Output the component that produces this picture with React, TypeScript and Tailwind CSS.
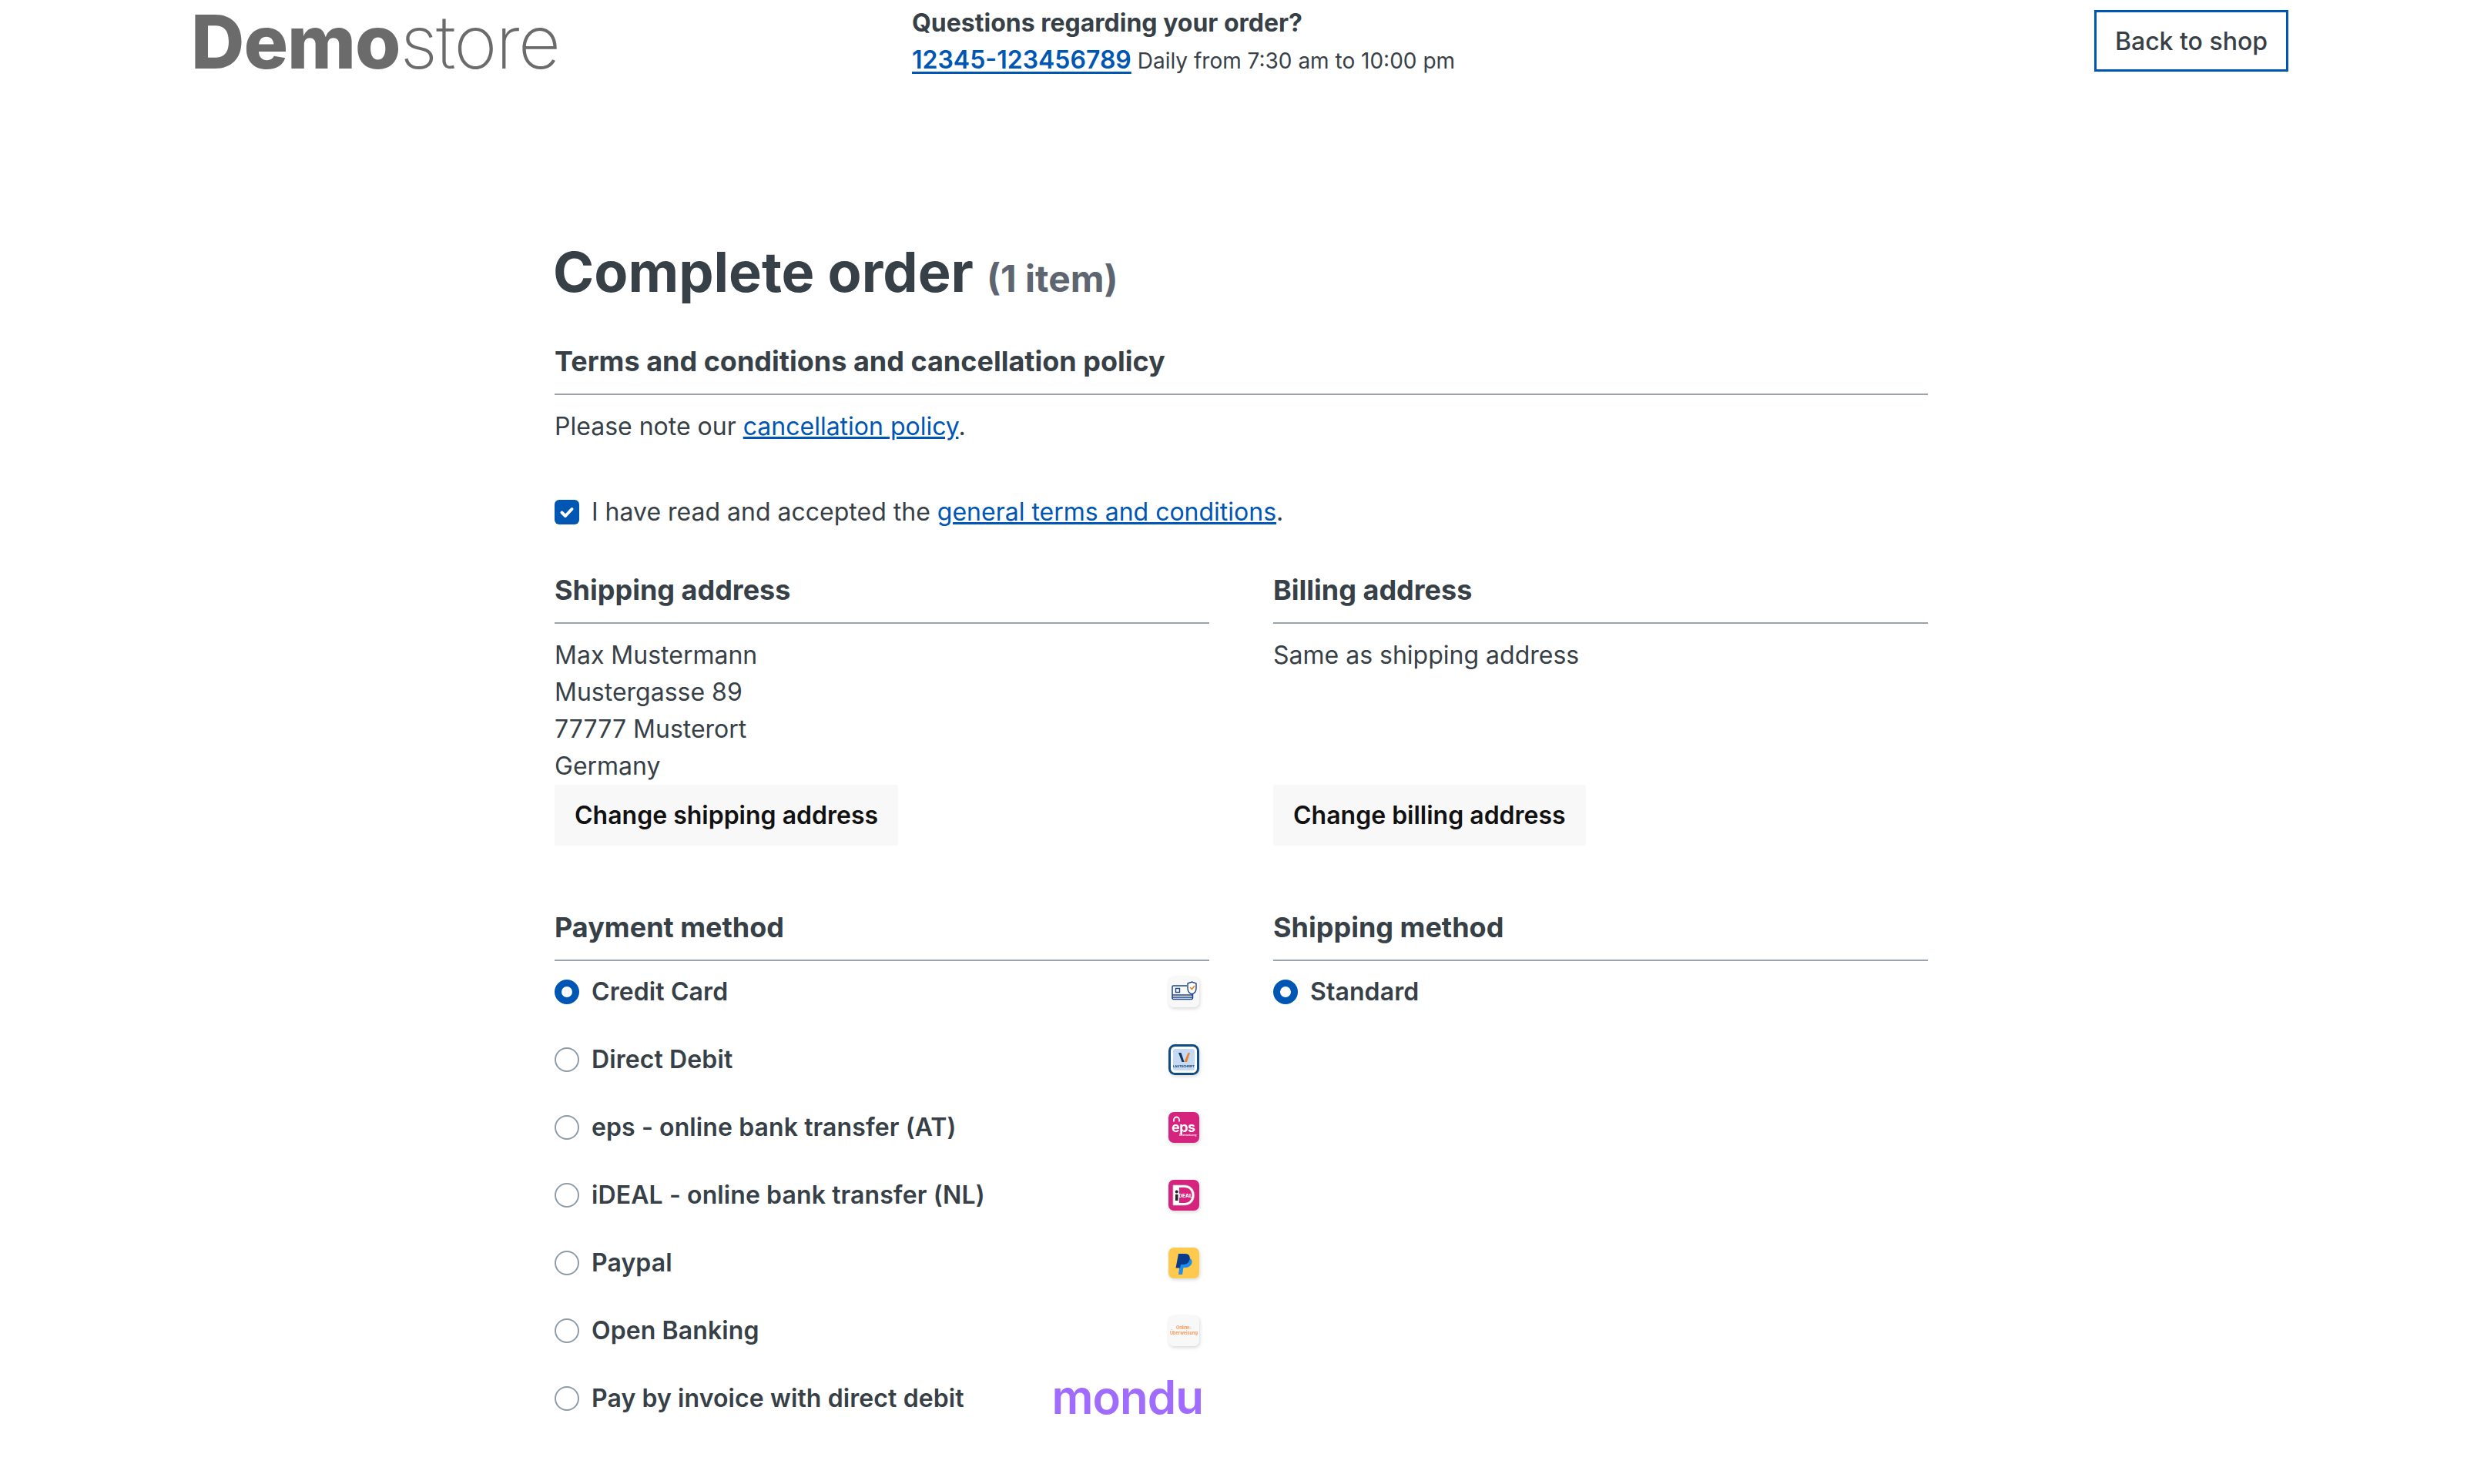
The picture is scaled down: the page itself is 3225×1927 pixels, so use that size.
const PAYMENTS = [
  { label: "Credit Card", icon: "card" },
  { label: "Direct Debit", icon: "debit" },
  { label: "eps - online bank transfer (AT)", icon: "eps" },
  { label: "iDEAL - online bank transfer (NL)", icon: "ideal" },
  { label: "Paypal", icon: "paypal" },
  { label: "Open Banking", icon: "open" },
] as const;

type IconName = (typeof PAYMENTS)[number]["icon"];

function PaymentIcon({ name }: { name: IconName }) {
  if (name === "card") {
    return (
      <svg viewBox="0 0 40 40" className="h-10 w-10 drop-shadow-[1px_2px_2px_rgba(0,0,0,0.15)]">
        <rect width="40" height="40" rx="7" fill="#f8f8f8" />
        <path d="M24 12H6.500a1.500 1.500 0 0 0-1.500 1.500V28a1.500 1.500 0 0 0 1.500 1.500H30a1.500 1.500 0 0 0 1.500-1.500V21" fill="none" stroke="#1c4587" strokeWidth="1.500" />
        <path d="M5 24h26.500M5 27h26.500" stroke="#1c4587" strokeWidth="1.400" />
        <rect x="9.500" y="15.500" width="5" height="5" fill="none" stroke="#1c4587" strokeWidth="1.400" />
        <path d="M25 9l5.500-2 5.500 2v6c0 4-2.500 7-5.500 8-3-1-5.500-4-5.500-8z" fill="#fff" stroke="#1c4587" strokeWidth="1.400" />
        <path d="M28 14l2.500 2.500 3.500-4.500" fill="none" stroke="#f07f2e" strokeWidth="1.600" />
      </svg>
    );
  }
  if (name === "debit") {
    return (
      <svg viewBox="0 0 40 40" className="h-10 w-10 drop-shadow-[1px_2px_2px_rgba(0,0,0,0.15)]">
        <rect x="1.500" y="1.500" width="37" height="37" rx="7" fill="#fff" stroke="#0f4c81" strokeWidth="3" />
        <rect x="6" y="6" width="28" height="28" rx="3" fill="#c5dbf3" />
        <path d="M13 11l4.500 12h3L16.500 11z" fill="#14345f" />
        <path d="M20.500 23l5-12h2.500L24 23z" fill="#f07f2e" />
        <text x="20" y="29.500" textAnchor="middle" fontSize="4" fontWeight="700" fill="#14345f" fontFamily="Inter, sans-serif">LASTSCHRIFT</text>
      </svg>
    );
  }
  if (name === "eps") {
    return (
      <svg viewBox="0 0 40 40" className="h-10 w-10 drop-shadow-[1px_2px_2px_rgba(0,0,0,0.15)]">
        <rect width="40" height="40" rx="7" fill="#d6247e" />
        <text x="4" y="26" fontSize="18" fontWeight="700" fill="#fff" fontFamily="Inter, sans-serif" letterSpacing="-0.500">eps</text>
        <path d="M7 12.500v-2.500a3.500 3.500 0 0 1 7 0v2.500" fill="none" stroke="#fff" strokeWidth="1.800" />
        <text x="14" y="31" fontSize="3.500" fill="#fff" fontFamily="Inter, sans-serif">Überweisung</text>
      </svg>
    );
  }
  if (name === "ideal") {
    return (
      <svg viewBox="0 0 40 40" className="h-10 w-10 drop-shadow-[1px_2px_2px_rgba(0,0,0,0.15)]">
        <rect width="40" height="40" rx="7" fill="#d6247e" />
        <path d="M6 7h15c7 0 12.500 5 12.500 13s-5.500 13-12.500 13H6z" fill="#fff" stroke="#bbb" strokeWidth="0.800" />
        <path d="M14 10h7c5.500 0 9.500 4 9.500 10s-4 10-9.500 10h-7z" fill="#d6247e" />
        <rect x="9" y="19" width="3.500" height="8" fill="#222" />
        <circle cx="10.700" cy="15.500" r="2" fill="#222" />
        <text x="22" y="22.500" textAnchor="middle" fontSize="6.500" fontWeight="800" fill="#fff" fontFamily="Inter, sans-serif">DEAL</text>
      </svg>
    );
  }
  if (name === "paypal") {
    return (
      <svg viewBox="0 0 40 40" className="h-10 w-10 drop-shadow-[1px_2px_2px_rgba(0,0,0,0.15)]">
        <rect width="40" height="40" rx="7" fill="#ffc94d" />
        <path d="M16 13h8c5 0 7 3 6.500 6.500S26.500 26 22.500 26h-3l-1.500 9h-5z" fill="#1f8ee8" />
        <path d="M13 8h8.500c5 0 7 3 6 7.500S23 22 19 22h-3l-1 4.500H9.500z" fill="#0a3a8c" />
      </svg>
    );
  }
  return (
    <svg viewBox="0 0 40 40" className="h-10 w-10 drop-shadow-[1px_2px_2px_rgba(0,0,0,0.15)]">
      <rect width="40" height="40" rx="7" fill="#f8f8f8" />
      <text x="20" y="18" textAnchor="middle" fontSize="5.500" fontWeight="700" fill="#f79a5a" fontFamily="Inter, sans-serif">Online-</text>
      <text x="20" y="25" textAnchor="middle" fontSize="5.500" fontWeight="700" fill="#f79a5a" fontFamily="Inter, sans-serif">Überweisung</text>
    </svg>
  );
}

function SectionTitle({ children }: { children: React.ReactNode }) {
  return (
    <h2 className="border-b-2 border-[#9aa3ad] pb-[18px] text-[36px] leading-[48px] font-bold text-[#373f47]">
      {children}
    </h2>
  );
}

function Radio({ checked }: { checked?: boolean }) {
  return checked ? (
    <span className="h-8 w-8 shrink-0 rounded-full border-[9px] border-[#0056b3] bg-white" />
  ) : (
    <span className="h-8 w-8 shrink-0 rounded-full border-2 border-[#8f9bab] bg-white" />
  );
}

function GrayButton({ children }: { children: React.ReactNode }) {
  return (
    <button className="h-[79px] rounded-[2px] bg-[#f8f8f8] px-[26px] text-[32px] font-semibold text-[#111]">
      {children}
    </button>
  );
}

export default function App() {
  return (
    <div className="min-h-[1927px] bg-white text-[32px] leading-[48px] text-[#373f47] [font-family:Inter,sans-serif]">
      {/* Header */}
      <header className="flex h-[93px] items-start pr-[254px] pl-[248px]">
        <div className="mt-[6px] w-[936px] text-[96px] leading-[96px] text-[#6b6b6b]">
          <span className="font-extrabold tracking-[-1px]">Demo</span>
          <span className="font-extralight tracking-[-2px]">store</span>
        </div>
        <div className="mt-[6px] flex-1">
          <div className="font-bold">Questions regarding your order?</div>
          <div className="text-[28px]">
            <a className="text-[32px] font-semibold text-[#0056b3] underline underline-offset-4">12345-123456789</a> Daily from 7:30 am to 10:00 pm
          </div>
        </div>
        <a className="mt-[13px] flex h-[80px] w-[252px] items-center justify-center border-[3px] border-[#0056b3] pt-[2px] font-medium">
          Back to shop
        </a>
      </header>

      <main className="ml-[720px] w-[1783px] pt-[212px]">
        <h1 className="-ml-[2px] text-[72px] leading-[96px] font-bold">
          Complete order <span className="text-[48px] text-[#5d6670]">(1 item)</span>
        </h1>

        <section className="mt-[35px]">
          <SectionTitle>Terms and conditions and cancellation policy</SectionTitle>
          <p className="mt-[17px]">
            Please note our <a className="text-[#0056b3] underline">cancellation policy</a>.
          </p>
          <label className="mt-[63px] flex items-center gap-4">
            <span className="flex h-8 w-8 items-center justify-center rounded-[6px] bg-[#0056b3]">
              <svg viewBox="0 0 24 24" className="h-6 w-6" fill="none" stroke="#fff" strokeWidth="4" strokeLinecap="round" strokeLinejoin="round">
                <path d="M5.500 12.500l4.500 4.500 8.500-9" />
              </svg>
            </span>
            <span>
              I have read and accepted the <a className="text-[#0056b3] underline">general terms and conditions</a>.
            </span>
          </label>
        </section>

        <div className="mt-[53px] grid grid-cols-[850px_850px] gap-x-[83px]">
          <section>
            <SectionTitle>Shipping address</SectionTitle>
            <div className="mt-[17px]">
              <div>Max Mustermann</div>
              <div>Mustergasse 89</div>
              <div>77777 Musterort</div>
              <div>Germany</div>
            </div>
            <GrayButton>Change shipping address</GrayButton>
          </section>
          <section className="flex flex-col items-start">
            <div className="w-full">
              <SectionTitle>Billing address</SectionTitle>
            </div>
            <div className="mt-[17px] h-[192px]">Same as shipping address</div>
            <GrayButton>Change billing address</GrayButton>
          </section>

          <section className="mt-[82px]">
            <SectionTitle>Payment method</SectionTitle>
            <div className="mt-[16px] flex flex-col gap-[40px] font-semibold">
              {PAYMENTS.map((p, i) => (
                <div key={p.label} className="flex h-[48px] items-center gap-4">
                  <Radio checked={i === 0} />
                  <span className="flex-1 tracking-[0.1px]">{p.label}</span>
                  <span className="mr-[13px] flex">
                    <PaymentIcon name={p.icon} />
                  </span>
                </div>
              ))}
              <div className="flex h-[48px] items-center gap-4">
                <Radio />
                <span className="flex-1 tracking-[0.1px]">Pay by invoice with direct debit</span>
                <span className="mt-[-4px] mr-[8px] text-[60px] leading-[48px] font-semibold tracking-[-1px] text-[#a06cff]">mondu</span>
              </div>
            </div>
          </section>
          <section className="mt-[82px]">
            <SectionTitle>Shipping method</SectionTitle>
            <div className="mt-[16px] flex h-[48px] items-center gap-4 font-semibold">
              <Radio checked />
              <span className="tracking-[0.1px]">Standard</span>
            </div>
          </section>
        </div>
      </main>
    </div>
  );
}
